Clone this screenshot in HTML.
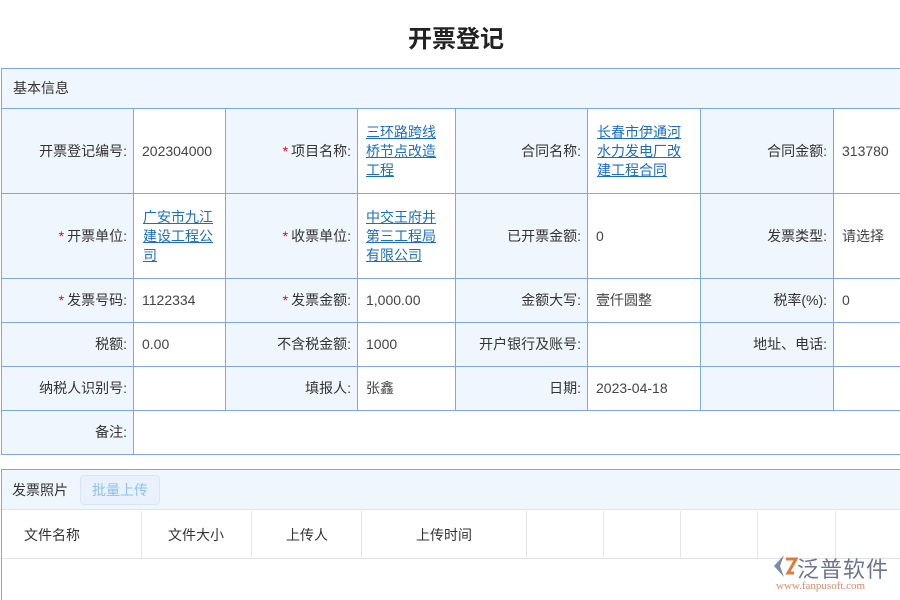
<!DOCTYPE html>
<html><head><meta charset="utf-8"><style>
*{margin:0;padding:0;box-sizing:border-box}
body{width:900px;height:600px;overflow:hidden;background:#fff;font-family:"Liberation Sans","Noto Sans CJK SC",sans-serif;font-size:14px;color:#333;position:relative}
.t{position:absolute;top:19px;left:0;width:912px;text-align:center;font-size:24px;font-weight:bold;color:#222}
.c{position:absolute;border-right:1px solid #7aaadc;border-bottom:1px solid #7aaadc;display:flex;align-items:center;line-height:19px}
.l{background:#f0f6fe;justify-content:flex-end;padding-right:6px}
.v{background:#fff;padding-left:8px;color:#444}
a{color:#1a6fc0;text-decoration:underline}
.s{color:#e00;margin-right:3px}
.h{position:absolute;display:flex;align-items:center}
</style></head><body>
<div class="t">开票登记</div>
<div style="position:absolute;left:1px;top:68px;width:899px;height:41px;background:#f0f6fe;border:1px solid #7aaadc;border-right:none;padding-left:11px;line-height:39px">基本信息</div>
<!-- row1 -->
<div class="c l" style="left:1px;top:109px;width:133px;height:85px;border-left:1px solid #7aaadc">开票登记编号:</div>
<div class="c v" style="left:134px;top:109px;width:92px;height:85px">202304000</div>
<div class="c l" style="left:226px;top:109px;width:132px;height:85px"><span class="s">*</span>项目名称:</div>
<div class="c v" style="left:358px;top:109px;width:98px;height:85px"><a>三环路跨线<br>桥节点改造<br>工程</a></div>
<div class="c l" style="left:456px;top:109px;width:132px;height:85px">合同名称:</div>
<div class="c v" style="left:588px;top:109px;width:113px;height:85px;padding-left:9px"><a>长春市伊通河<br>水力发电厂改<br>建工程合同</a></div>
<div class="c l" style="left:701px;top:109px;width:133px;height:85px">合同金额:</div>
<div class="c v" style="left:834px;top:109px;width:66px;height:85px;border-right:none">313780</div>
<!-- row2 -->
<div class="c l" style="left:1px;top:194px;width:133px;height:85px;border-left:1px solid #7aaadc"><span class="s">*</span>开票单位:</div>
<div class="c v" style="left:134px;top:194px;width:92px;height:85px;padding-left:9px"><a>广安市九江<br>建设工程公<br>司</a></div>
<div class="c l" style="left:226px;top:194px;width:132px;height:85px"><span class="s">*</span>收票单位:</div>
<div class="c v" style="left:358px;top:194px;width:98px;height:85px"><a>中交王府井<br>第三工程局<br>有限公司</a></div>
<div class="c l" style="left:456px;top:194px;width:132px;height:85px">已开票金额:</div>
<div class="c v" style="left:588px;top:194px;width:113px;height:85px">0</div>
<div class="c l" style="left:701px;top:194px;width:133px;height:85px">发票类型:</div>
<div class="c v" style="left:834px;top:194px;width:66px;height:85px;border-right:none">请选择</div>
<!-- row3 -->
<div class="c l" style="left:1px;top:279px;width:133px;height:44px;border-left:1px solid #7aaadc"><span class="s">*</span>发票号码:</div>
<div class="c v" style="left:134px;top:279px;width:92px;height:44px">1122334</div>
<div class="c l" style="left:226px;top:279px;width:132px;height:44px"><span class="s">*</span>发票金额:</div>
<div class="c v" style="left:358px;top:279px;width:98px;height:44px">1,000.00</div>
<div class="c l" style="left:456px;top:279px;width:132px;height:44px">金额大写:</div>
<div class="c v" style="left:588px;top:279px;width:113px;height:44px">壹仟圆整</div>
<div class="c l" style="left:701px;top:279px;width:133px;height:44px">税率(%):</div>
<div class="c v" style="left:834px;top:279px;width:66px;height:44px;border-right:none">0</div>
<!-- row4 -->
<div class="c l" style="left:1px;top:323px;width:133px;height:44px;border-left:1px solid #7aaadc">税额:</div>
<div class="c v" style="left:134px;top:323px;width:92px;height:44px">0.00</div>
<div class="c l" style="left:226px;top:323px;width:132px;height:44px">不含税金额:</div>
<div class="c v" style="left:358px;top:323px;width:98px;height:44px">1000</div>
<div class="c l" style="left:456px;top:323px;width:132px;height:44px">开户银行及账号:</div>
<div class="c v" style="left:588px;top:323px;width:113px;height:44px"></div>
<div class="c l" style="left:701px;top:323px;width:133px;height:44px">地址、电话:</div>
<div class="c v" style="left:834px;top:323px;width:66px;height:44px;border-right:none"></div>
<!-- row5 -->
<div class="c l" style="left:1px;top:367px;width:133px;height:44px;border-left:1px solid #7aaadc">纳税人识别号:</div>
<div class="c v" style="left:134px;top:367px;width:92px;height:44px"></div>
<div class="c l" style="left:226px;top:367px;width:132px;height:44px">填报人:</div>
<div class="c v" style="left:358px;top:367px;width:98px;height:44px">张鑫</div>
<div class="c l" style="left:456px;top:367px;width:132px;height:44px">日期:</div>
<div class="c v" style="left:588px;top:367px;width:113px;height:44px">2023-04-18</div>
<div class="c l" style="left:701px;top:367px;width:133px;height:44px"></div>
<div class="c v" style="left:834px;top:367px;width:66px;height:44px;border-right:none"></div>
<!-- row6 -->
<div class="c l" style="left:1px;top:411px;width:133px;height:44px;border-left:1px solid #7aaadc">备注:</div>
<div class="c v" style="left:134px;top:411px;width:766px;height:44px;border-right:none"></div>
<!-- section 2 -->
<div style="position:absolute;left:1px;top:469px;width:899px;height:131px;border-top:1px solid #7aaadc;border-left:1px solid #7aaadc"></div>
<div style="position:absolute;left:2px;top:470px;width:898px;height:40px;background:#f0f6fe;border-bottom:1px solid #e3e3e3"></div>
<div class="h" style="left:12px;top:470px;height:40px">发票照片</div>
<div class="h" style="left:80px;top:475px;width:80px;height:30px;justify-content:center;background:#e8f1fc;border:1px solid #d6e6f8;border-radius:4px;color:#8ec0f0">批量上传</div>
<div style="position:absolute;left:2px;top:558px;width:898px;border-top:1px solid #e3e3e3"></div>
<div style="position:absolute;left:141px;top:511px;height:47px;border-left:1px solid #e6e6e6"></div>
<div style="position:absolute;left:251px;top:511px;height:47px;border-left:1px solid #e6e6e6"></div>
<div style="position:absolute;left:361px;top:511px;height:47px;border-left:1px solid #e6e6e6"></div>
<div style="position:absolute;left:526px;top:511px;height:47px;border-left:1px solid #e6e6e6"></div>
<div style="position:absolute;left:603px;top:511px;height:47px;border-left:1px solid #e6e6e6"></div>
<div style="position:absolute;left:680px;top:511px;height:47px;border-left:1px solid #e6e6e6"></div>
<div style="position:absolute;left:757px;top:511px;height:47px;border-left:1px solid #e6e6e6"></div>
<div style="position:absolute;left:835px;top:511px;height:47px;border-left:1px solid #e6e6e6"></div>
<div class="h" style="left:24px;top:511px;height:47px">文件名称</div>
<div class="h" style="left:168px;top:511px;height:47px">文件大小</div>
<div class="h" style="left:286px;top:511px;height:47px">上传人</div>
<div class="h" style="left:416px;top:511px;height:47px">上传时间</div>
<!-- logo -->
<svg style="position:absolute;left:770px;top:553px" width="28" height="26" viewBox="0 0 28 26"><path d="M14 2 L4 13 L14 24 L10 13 Z" fill="#7a8aa8"/><path d="M16 6 L26 6 L18 20 L24 20" stroke="#e07a3a" stroke-width="3" fill="none"/></svg>
<div style="position:absolute;left:797px;top:552px;font-size:22px;color:#6a7690;letter-spacing:1px">泛普软件</div>
<div style="position:absolute;left:776px;top:580px;font-family:'Liberation Serif',serif;font-size:11px;color:#d98a6a">www.fanpusoft.com</div>
</body></html>
